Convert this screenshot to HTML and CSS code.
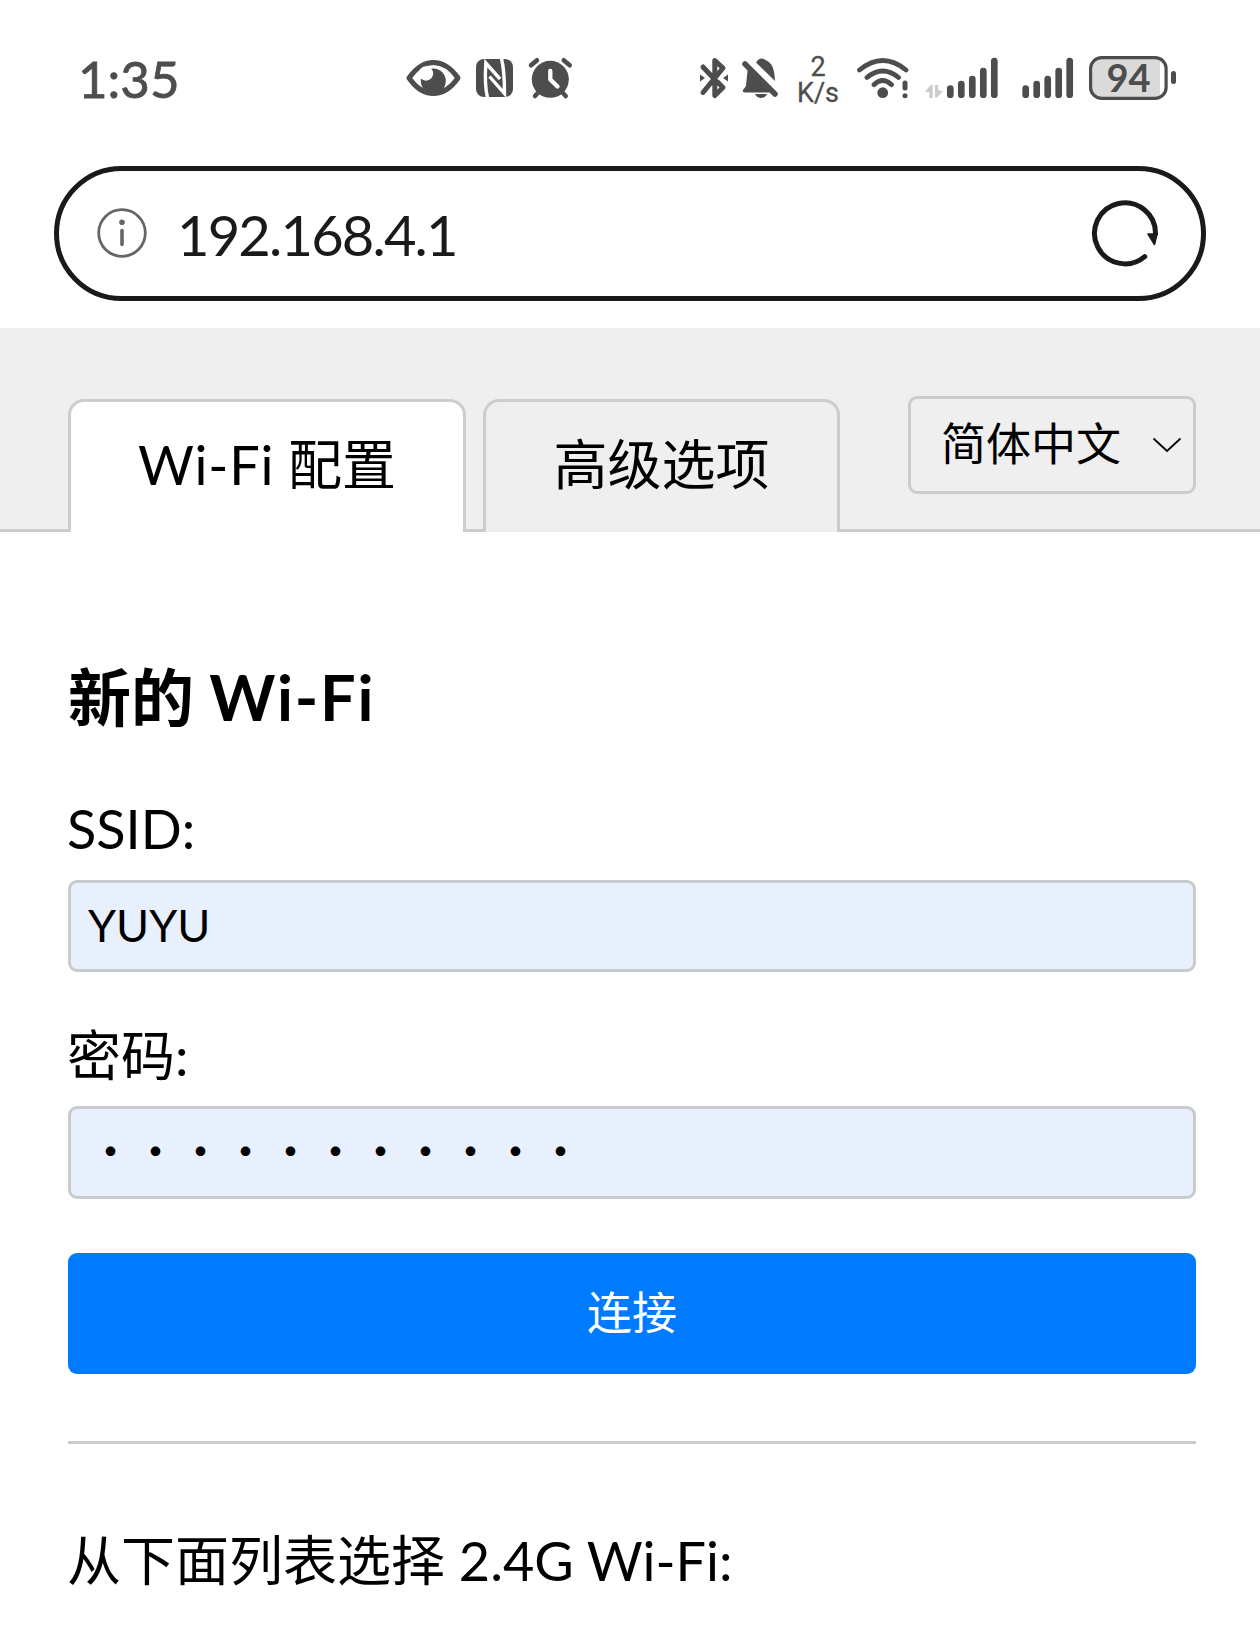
FILE: index.html
```html
<!DOCTYPE html>
<html lang="zh-CN">

<head>
  <meta charset="UTF-8">
  <meta name="viewport" content="width=device-width, initial-scale=1.0">
  <title>Wi-Fi 配置</title>
  <link rel="stylesheet" href="styles.css">
</head>

<body>

  <div class="status-bar">
    <span class="clock">1:35</span>

    <div class="status-left">
      <!-- eye comfort -->
      <svg width="58" height="48" viewBox="0 0 58 48">
        <path d="M5 24C12 14 20 8.5 29.3 8.5S47 14 54 24C47 34 39 39.5 29.3 39.5S12 34 5 24Z" fill="none" stroke="#4d4d4d" stroke-width="5" stroke-linejoin="round"/>
        <circle cx="29.3" cy="27" r="12.5" fill="#4d4d4d"/>
        <circle cx="22" cy="19.5" r="7.2" fill="#fff"/>
      </svg>
      <!-- NFC -->
      <svg width="41" height="48" viewBox="0 0 41 48">
        <rect x="2" y="5" width="37" height="38" rx="8" fill="#4d4d4d"/>
        <path d="M13.5 43.5C11 34 11 22 11.8 9L26 25M27.5 4.5C30.5 16 30.5 28 30.5 39.5L15.5 22.5" fill="none" stroke="#fff" stroke-width="3.4"/>
      </svg>
      <!-- alarm -->
      <svg width="47" height="48" viewBox="0 0 47 48">
        <circle cx="23.3" cy="25.3" r="18.5" fill="#4d4d4d"/>
        <path d="M4 11.3L10 6.2M36.7 6.2L42.7 11.3M8 42L14 35.5M38.7 42L32.7 35.5" stroke="#4d4d4d" stroke-width="4.5" stroke-linecap="round"/>
        <path d="M23.3 17V25.5L30.5 32.5" fill="none" stroke="#fff" stroke-width="4.3" stroke-linecap="round" stroke-linejoin="round"/>
      </svg>
    </div>

    <div class="status-right">
      <!-- bluetooth -->
      <svg width="32" height="48" viewBox="0 0 32 48">
        <path d="M5 13L14 22.5M19.5 28L25 33.5L16.8 41.5V29M16.8 22V6.5L25 14L5 38.5" fill="none" stroke="#4d4d4d" stroke-width="5" stroke-linecap="round" stroke-linejoin="round"/>
        <path d="M2 20.5V27.5L7 24ZM30 20.5V27.5L25 24Z" fill="#4d4d4d"/>
      </svg>
      <!-- muted bell -->
      <svg class="bell" width="40" height="48" viewBox="0 0 40 48">
        <path d="M8 13C7 20 6.5 28 6 32L3 36Q2 38.5 5 38.5H32ZM16 8.5Q20 2 25.5 6C32 9 34.5 14 35 27ZM15 40H27Q25 44 21 44T15 40Z" fill="#4d4d4d"/>
        <path d="M5 10L35 40" stroke="#4d4d4d" stroke-width="5.5" stroke-linecap="round"/>
      </svg>
      <div class="net-speed"><span>2</span><span>K/s</span></div>
      <!-- wifi -->
      <svg class="wifi" width="56" height="48" viewBox="0 0 56 48">
        <path d="M4.5 16Q27.7 -3 51 16M12 23.5Q27.7 10.5 43.5 23.5M19 30.7Q27.7 22.5 36.5 30.7" fill="none" stroke="#4d4d4d" stroke-width="4.8" stroke-linecap="round"/>
        <circle cx="27.7" cy="38.7" r="5.4" fill="#4d4d4d"/>
        <path d="M50 29V34" stroke="#4d4d4d" stroke-width="5" stroke-linecap="round"/>
        <circle cx="50" cy="41.7" r="2.5" fill="#4d4d4d"/>
      </svg>
      <!-- mobile signal, SIM 1 -->
      <svg class="signal" width="76" height="48" viewBox="0 0 76 48">
        <path d="M2 37.7L7.7 31H9.7V44H6.3V38.3ZM12 31H15.3V36.5L20 37L14 43.5H12Z" fill="#ccc"/>
        <path d="M27.3 34.6V40.7M38.3 30V40.7M49.3 25V40.7M60.3 17V40.7M71.3 7V40.7" stroke="#4d4d4d" stroke-width="6.7" stroke-linecap="round"/>
      </svg>
      <!-- mobile signal, SIM 2 -->
      <svg class="signal-two" width="55" height="48" viewBox="0 0 55 48">
        <path d="M5.7 34.6V40.7M16.7 30V40.7M27.7 25V40.7M38.7 17V40.7M49.7 7V40.7" stroke="#4d4d4d" stroke-width="6.7" stroke-linecap="round"/>
      </svg>
      <svg class="battery" width="90" height="48" viewBox="0 0 90 48">
        <path d="M13 3.5H73V44.5H13Q3.5 44.5 3.5 34V14Q3.5 3.5 13 3.5Z" fill="#dadada"/>
        <rect x="3.6" y="3.6" width="75.5" height="40.8" rx="11" fill="none" stroke="#4d4d4d" stroke-width="3.2"/>
        <rect x="84" y="17" width="5" height="13" rx="2.5" fill="#4d4d4d"/>
        <text class="battery-level" x="41.5" y="38">94</text>
      </svg>
    </div>
  </div>

  <div class="address-bar">
    <svg width="50" height="50" viewBox="0 0 50 50">
      <circle cx="25" cy="25" r="23.3" fill="none" stroke="#666" stroke-width="2.8"/>
      <circle cx="25" cy="14.3" r="2.8" fill="#666"/>
      <path d="M25 22.5V36.5" stroke="#666" stroke-width="3.6" stroke-linecap="round"/>
    </svg>
    <span class="address">192.168.4.1</span>
    <svg width="70" height="70" viewBox="0 0 70 70">
      <path d="M54.7 58.6A30.5 30.5 0 1 1 65.5 36" fill="none" stroke="#1a1a1a" stroke-width="5" stroke-linecap="round"/>
      <path d="M58 36H67L64.5 46.5Z" fill="#1a1a1a" stroke="#1a1a1a" stroke-width="1.5" stroke-linejoin="round"/>
    </svg>
  </div>

  <div class="tabs">
    <div class="tab active"><span class="latin">Wi-Fi</span> 配置</div>
    <div class="tab">高级选项</div>
    <div class="language">
      <span>简体中文</span>
      <svg width="30" height="16" viewBox="0 0 30 16">
        <path d="M1.5 1.5L15 14L28.5 1.5" fill="none" stroke="#000" stroke-width="1.8"/>
      </svg>
    </div>
  </div>

  <form class="content">
    <h1>新的 <span class="latin">Wi-Fi</span></h1>

    <label for="ssid">SSID:</label>
    <input type="text" id="ssid" value="YUYU">

    <label for="password">密码:</label>
    <input type="password" id="password" value="12345678901">

    <button type="button">连接</button>

    <hr>

    <p class="list-title">从下面列表选择 2.4G Wi-Fi:</p>
  </form>

</body>

</html>
```

FILE: styles.css
```css
* {
  box-sizing: border-box;
}

body {
  font-family: Lato, 'Noto Sans CJK SC', sans-serif;
  background-color: white;
  color: #000;
  margin: 0;
  font-size: 54px;
  height: 1635px;
  overflow: hidden;
}

svg {
  display: block;
  flex: none;
}

.status-bar {
  display: flex;
  height: 166px;
  padding: 54px 83px 0 78px;
  color: #4d4d4d;
}

.clock {
  width: 326px;
  font-size: 51px;
  line-height: 50px;
  -webkit-text-stroke: 0.8px #4d4d4d;
}

.status-left {
  display: flex;
  gap: 12px;
}

.status-right {
  display: flex;
  margin-left: auto;
}

.bell {
  margin-left: 10px;
}

.net-speed {
  display: flex;
  flex-direction: column;
  align-items: center;
  width: 44px;
  margin: 0 15px 0 16px;
  font-family: Roboto, sans-serif;
  font-size: 27px;
  line-height: 26px;
  -webkit-text-stroke: 0.3px #4d4d4d;
}

.signal {
  margin-left: 12px;
}

.signal-two {
  margin-left: 21px;
}

.battery {
  margin-left: 12px;
}

.battery-level {
  font-size: 38px;
  font-weight: 700;
  fill: #4d4d4d;
  text-anchor: middle;
}

.address-bar {
  display: flex;
  align-items: center;
  height: 135px;
  margin: 0 54px 27px;
  padding: 0 41px 2px 38px;
  border: 5px solid #1a1a1a;
  border-radius: 68px;
  color: #1a1a1a;
}

.address {
  flex: 1;
  padding: 4px 0 0 30px;
  font-size: 56px;
  letter-spacing: -1.8px;
}

.tabs {
  display: flex;
  align-items: flex-end;
  height: 204px;
  padding: 0 64px 0 68px;
  background: linear-gradient(#ccc, #ccc) bottom / 100% 3px no-repeat #efefef;
}

.tab {
  width: 357px;
  height: 133px;
  margin-right: 17px;
  border: 3px solid #ccc;
  border-bottom: none;
  border-radius: 16px 16px 0 0;
  background-color: #efefef;
  line-height: 126px;
  text-align: center;
}

.tab.active {
  width: 398px;
  background-color: white;
}

.tab .latin {
  letter-spacing: 0.8px;
}

.language {
  display: flex;
  align-items: center;
  justify-content: space-between;
  width: 288px;
  height: 98px;
  margin: 0 0 38px auto;
  padding: 0 11px 0 30px;
  border: 3px solid #ccc;
  border-radius: 9px;
  font-size: 45px;
  line-height: 90px;
}

.language span {
  height: 92px;
}

.content {
  padding: 0 64px 0 68px;
}

h1 {
  margin: 120px 0 0;
  font-size: 63px;
  line-height: 90px;
}

h1 .latin {
  letter-spacing: 1.8px;
}

label {
  display: block;
  height: 80px;
  margin-left: -1px;
  line-height: 80px;
}

h1 + label {
  margin-top: 47px;
}

input {
  display: block;
  width: 100%;
  height: 92px;
  margin: 11px 0 44px;
  padding: 0 17px 3px;
  border: 3px solid #c8cacd;
  border-radius: 9px;
  background-color: #e8f0fe;
  color: #000;
  font-family: Lato, 'Noto Sans CJK SC', sans-serif;
  font-size: 45px;
}

input[type="password"] {
  height: 93px;
  margin-top: 10px;
  padding-bottom: 6px;
  font-family: 'Noto Sans CJK SC', sans-serif;
}

button {
  display: block;
  width: 100%;
  height: 121px;
  margin-top: 54px;
  padding: 0 6px 6px;
  border: none;
  border-radius: 9px;
  background-color: #007bff;
  color: white;
  font-family: Lato, 'Noto Sans CJK SC', sans-serif;
  font-size: 45px;
}

hr {
  height: 3px;
  margin: 67px 0 0;
  border: none;
  background-color: #ccc;
}

.list-title {
  margin: 77px 0 0 -1px;
  line-height: 80px;
  white-space: nowrap;
}
```
